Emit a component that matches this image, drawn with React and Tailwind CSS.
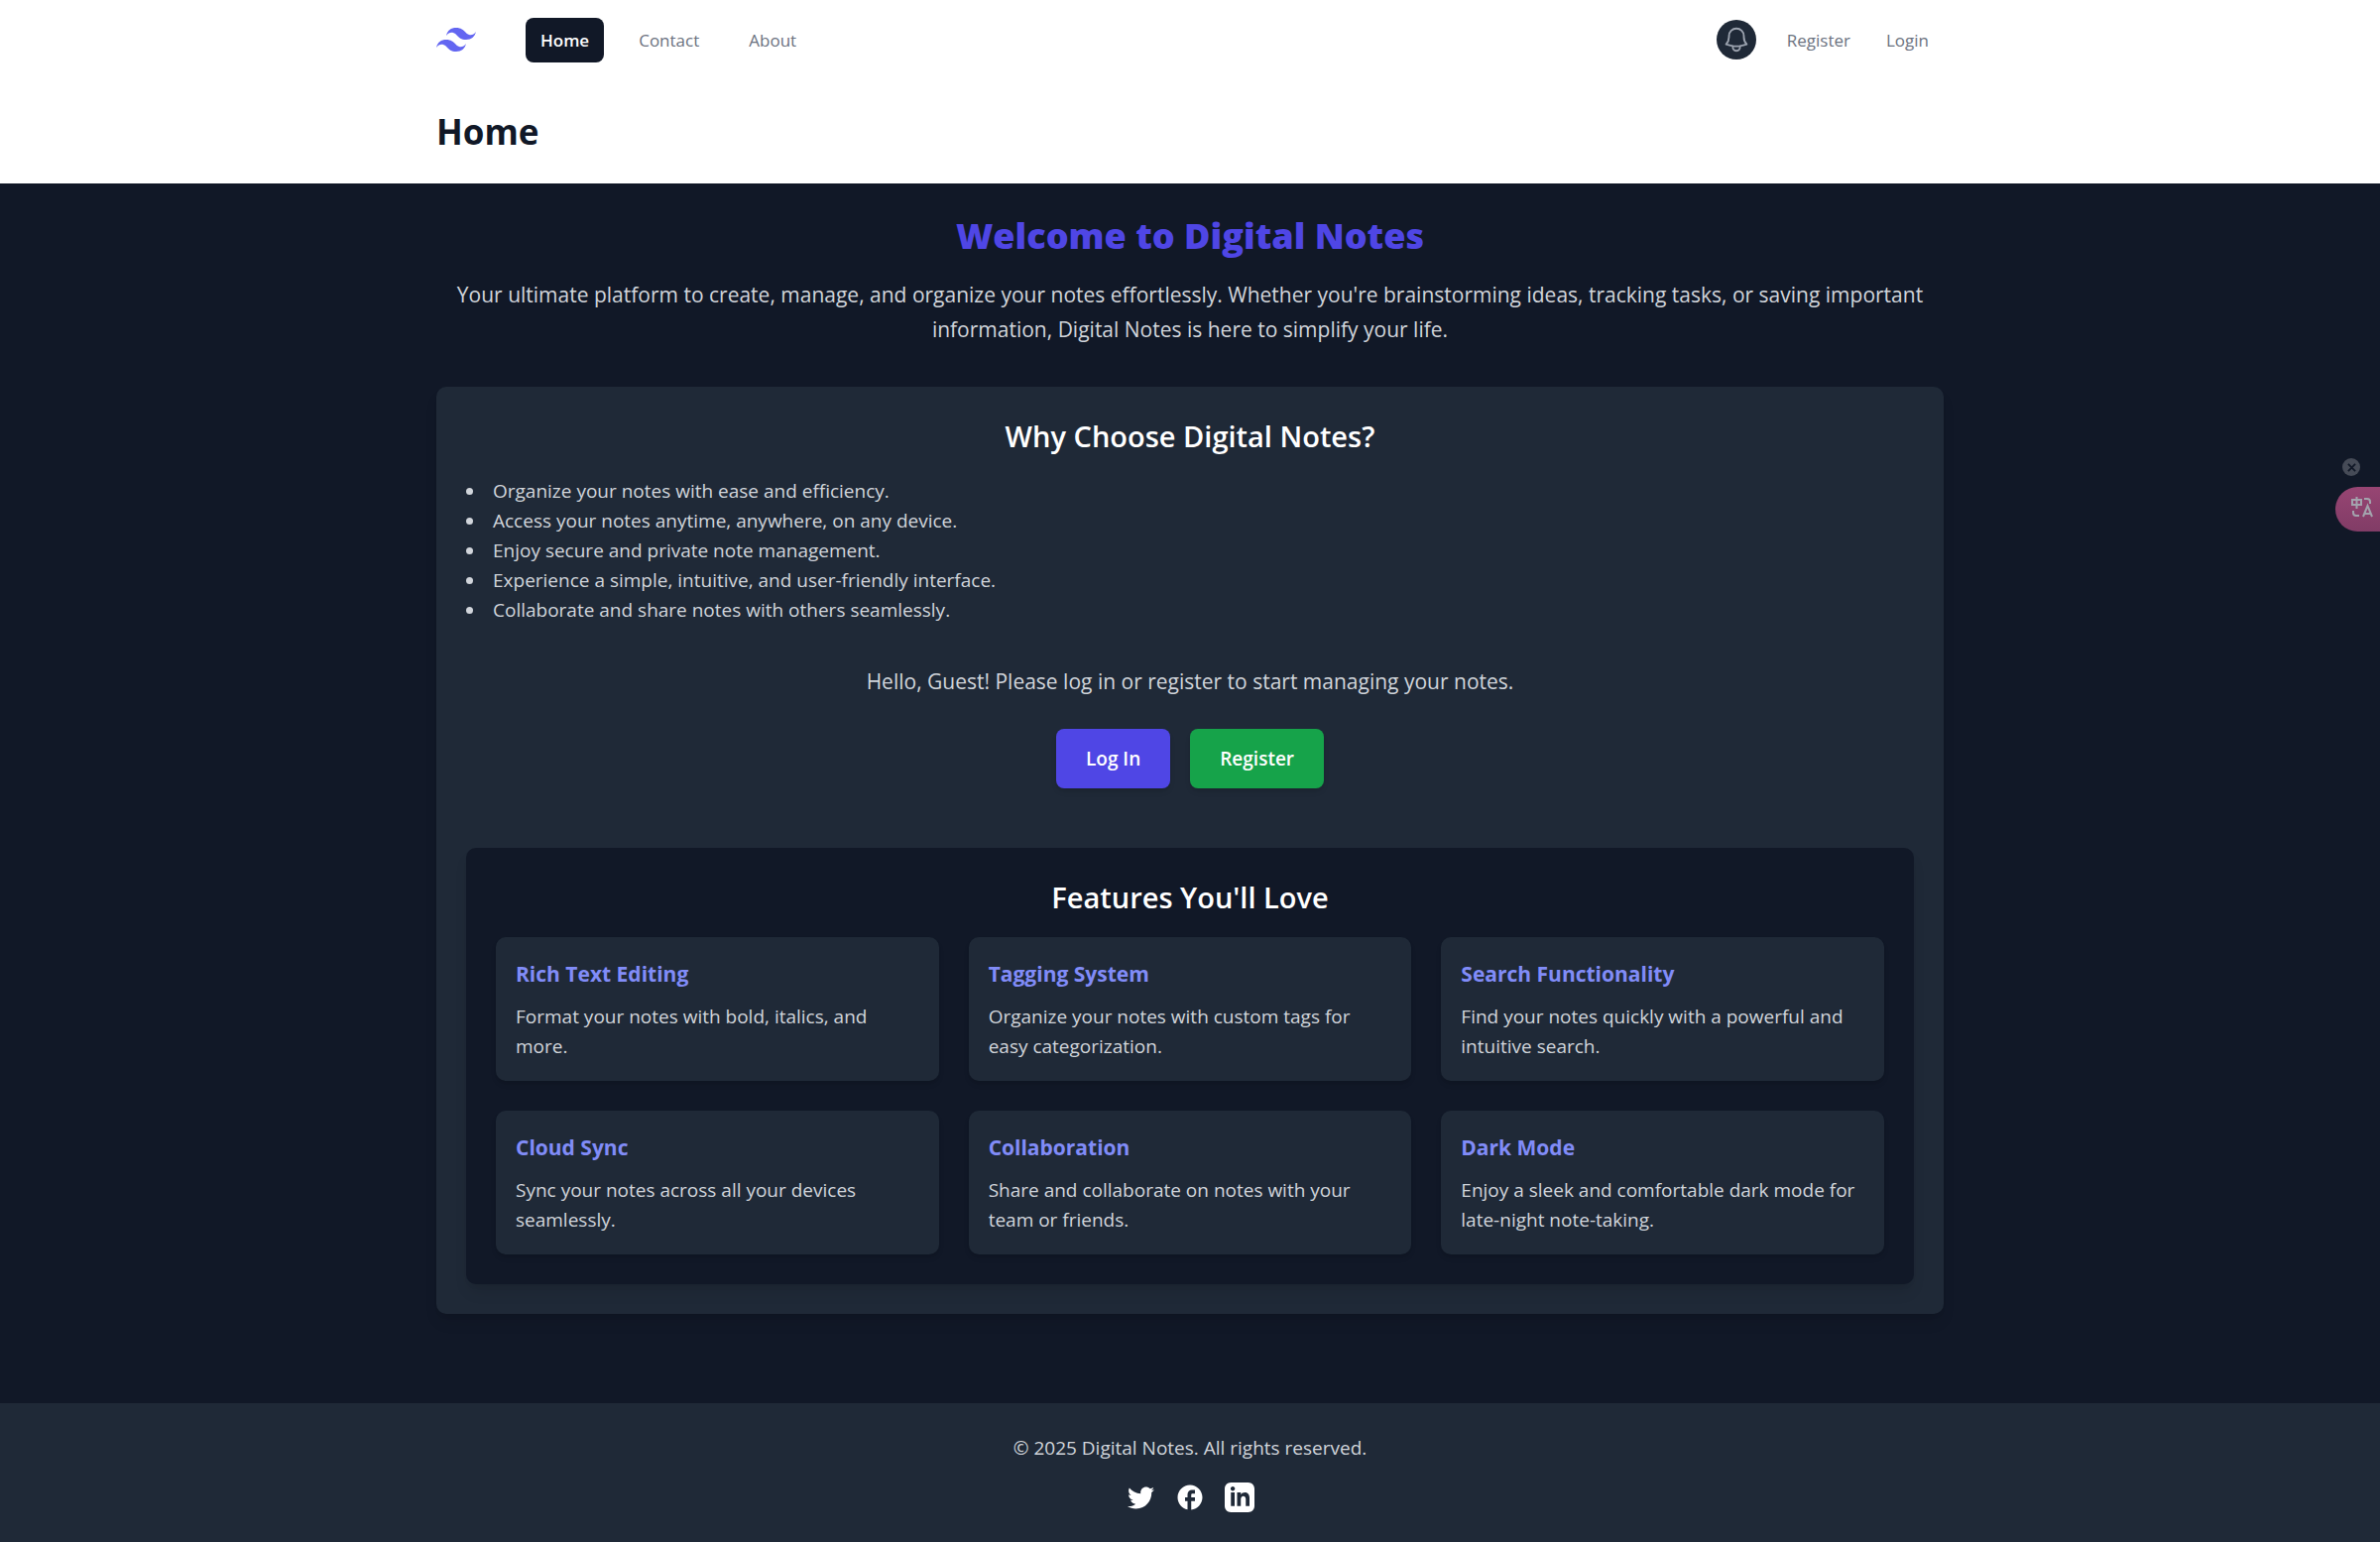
import { FaTwitter } from "react-icons/fa";
import { HiOutlineBell } from "react-icons/hi2";

const reasons = [
  "Organize your notes with ease and efficiency.",
  "Access your notes anytime, anywhere, on any device.",
  "Enjoy secure and private note management.",
  "Experience a simple, intuitive, and user-friendly interface.",
  "Collaborate and share notes with others seamlessly.",
];

const features = [
  ["Rich Text Editing", "Format your notes with bold, italics, and more."],
  ["Tagging System", "Organize your notes with custom tags for easy categorization."],
  ["Search Functionality", "Find your notes quickly with a powerful and intuitive search."],
  ["Cloud Sync", "Sync your notes across all your devices seamlessly."],
  ["Collaboration", "Share and collaborate on notes with your team or friends."],
  ["Dark Mode", "Enjoy a sleek and comfortable dark mode for late-night note-taking."],
];

function NavLink({ children, active }) {
  return (
    <a
      href="#"
      className={
        active
          ? "rounded-lg bg-[#111827] px-[15px] py-2.5 font-semibold text-white"
          : "rounded-lg px-[15px] py-2.5 font-medium text-[#6b7280]"
      }
    >
      {children}
    </a>
  );
}

function Logo() {
  return (
    <svg viewBox="0 4.8 24 14.4" className="h-6 w-10 fill-[#6366f1]" role="img" aria-label="Digital Notes">
      <path d="M12.001,4.8c-3.2,0-5.2,1.6-6,4.8c1.2-1.6,2.6-2.2,4.2-1.8c0.913,0.228,1.565,0.89,2.288,1.624 C13.666,10.618,15.027,12,18.001,12c3.2,0,5.2-1.6,6-4.8c-1.2,1.6-2.6,2.2-4.2,1.8c-0.913-0.228-1.565-0.89-2.288-1.624 C16.337,6.182,14.976,4.8,12.001,4.8z M6.001,12c-3.2,0-5.2,1.6-6,4.8c1.2-1.6,2.6-2.2,4.2-1.8c0.913,0.228,1.565,0.89,2.288,1.624 c1.177,1.194,2.538,2.576,5.512,2.576c3.2,0,5.2-1.6,6-4.8c-1.2,1.6-2.6,2.2-4.2,1.8c-0.913-0.228-1.565-0.89-2.288-1.624 C10.337,13.382,8.976,12,6.001,12z" />
    </svg>
  );
}

export default function App() {
  return (
    <div className="relative flex min-h-screen flex-col bg-[#111827] font-['Open_Sans','Noto_Sans',sans-serif] text-[19px] leading-[30px] text-[#d1d5db]">
      <nav className="bg-white text-[17px] leading-[25px]">
        <div className="mx-auto flex h-20 max-w-[1600px] items-center justify-between px-10">
          <div className="flex items-center gap-[50px]">
            <Logo />
            <div className="flex items-center gap-5">
              <NavLink active>Home</NavLink>
              <NavLink>Contact</NavLink>
              <NavLink>About</NavLink>
            </div>
          </div>
          <div className="flex items-center">
            <button type="button" aria-label="Notifications" className="mr-4 grid size-10 place-items-center rounded-full bg-[#1f2937] text-[#9ca3af]">
              <HiOutlineBell className="size-[30px]" />
            </button>
            <div className="flex gap-1.5">
              <NavLink>Register</NavLink>
              <NavLink>Login</NavLink>
            </div>
          </div>
        </div>
      </nav>

      <header className="bg-white">
        <div className="mx-auto max-w-[1600px] px-10 py-[30px]">
          <h1 className="text-[35px] leading-[45px] font-bold text-[#111827]">Home</h1>
        </div>
      </header>

      <main className="mx-auto w-full max-w-[1600px] px-10 pt-[30px] pb-[90px]">
        <section className="text-center">
          <h2 className="text-[36px] leading-[45px] font-extrabold text-[#4f46e5]">Welcome to Digital Notes</h2>
          <p className="mt-5 text-[21px] leading-[35px]">
            Your ultimate platform to create, manage, and organize your notes effortlessly. Whether you're brainstorming
            ideas, tracking tasks, or saving important information, Digital Notes is here to simplify your life.
          </p>
        </section>

        <section className="mt-10 rounded-[10px] bg-[#1f2937] p-[30px] shadow-lg">
          <h3 className="text-center text-[29px] leading-10 font-semibold text-white">Why Choose Digital Notes?</h3>
          <ul className="mt-5 list-inside list-disc">
            {reasons.map((r) => (
              <li key={r}>{r}</li>
            ))}
          </ul>

          <p className="mt-10 text-center text-[21px] leading-[35px]">
            Hello, Guest! Please log in or register to start managing your notes.
          </p>
          <div className="mt-[30px] flex justify-center gap-5 font-semibold text-white">
            <a href="#" className="rounded-lg bg-[#4f46e5] px-[30px] py-[15px] shadow-md">Log In</a>
            <a href="#" className="rounded-lg bg-[#16a34a] px-[30px] py-[15px] shadow-md">Register</a>
          </div>

          <div className="mt-[60px] rounded-[10px] bg-[#111827] p-[30px] shadow-lg">
            <h3 className="text-center text-[29px] leading-10 font-semibold text-white">Features You'll Love</h3>
            <div className="mt-5 grid grid-cols-3 gap-[30px]">
              {features.map(([title, text]) => (
                <article key={title} className="rounded-[10px] bg-[#1f2937] p-5 shadow-md">
                  <h4 className="text-[21px] leading-[35px] font-bold text-[#818cf8]">{title}</h4>
                  <p className="mt-2.5">{text}</p>
                </article>
              ))}
            </div>
          </div>
        </section>
      </main>

      <footer className="bg-[#1f2937] py-[30px] text-center">
        <p>© 2025 Digital Notes. All rights reserved.</p>
        <div className="mt-5 flex items-center justify-center gap-5 text-white">
          <a href="#" aria-label="Twitter" className="grid size-[30px] place-items-center">
            <FaTwitter className="size-[27px]" />
          </a>
          <a href="#" aria-label="Facebook" className="grid size-[30px] place-items-center">
            <svg viewBox="0 0 24 24" className="size-[30px] fill-current">
              <path d="M22 12c0-5.52-4.48-10-10-10S2 6.48 2 12c0 4.84 3.44 8.87 8 9.8V15H8v-3h2V9.5C10 7.57 11.57 6 13.5 6H16v3h-2c-.55 0-1 .45-1 1v2h3v3h-3v6.95c5.05-.5 9-4.76 9-9.95z" />
            </svg>
          </a>
          <a href="#" aria-label="LinkedIn" className="grid size-[30px] place-items-center">
            <svg viewBox="0 0 24 24" className="size-[30px] fill-current">
              <path d="M19 0h-14c-2.761 0-5 2.239-5 5v14c0 2.761 2.239 5 5 5h14c2.762 0 5-2.239 5-5v-14c0-2.761-2.238-5-5-5zm-11 19h-3v-11h3v11zm-1.5-12.268c-.966 0-1.75-.79-1.75-1.764s.784-1.764 1.75-1.764 1.75.79 1.75 1.764-.783 1.764-1.75 1.764zm13.5 12.268h-3v-5.604c0-3.368-4-3.113-4 0v5.604h-3v-11h3v1.765c1.396-2.586 7-2.777 7 2.476v6.759z" />
            </svg>
          </a>
        </div>
      </footer>

      <div className="absolute top-[462px] right-0 flex flex-col items-end gap-[11px]">
        <button type="button" aria-label="Close translator" className="mr-5 grid size-[18px] place-items-center rounded-full bg-[#464b57]">
          <svg viewBox="0 0 10 10" className="size-[9px] fill-none stroke-[#111827] stroke-2">
            <path d="M1 1l8 8M9 1l-8 8" />
          </svg>
        </button>
        <button type="button" aria-label="Translate" className="flex h-[45px] w-[45px] items-start rounded-l-full bg-linear-to-b from-[#974573] to-[#813c66] pt-2.5 pl-4 text-[#a3a3ad]">
          <svg viewBox="0 0 22 22" className="size-[22px] fill-none stroke-current stroke-2">
            <path d="M1 3h9v5H1zM5.5 0v12M13 2h3q3 0 3 3v2M2 14v2q0 3 3 3h3M12 20l4.500-11 4.500 11M13.500 17h6" />
          </svg>
        </button>
      </div>
    </div>
  );
}
